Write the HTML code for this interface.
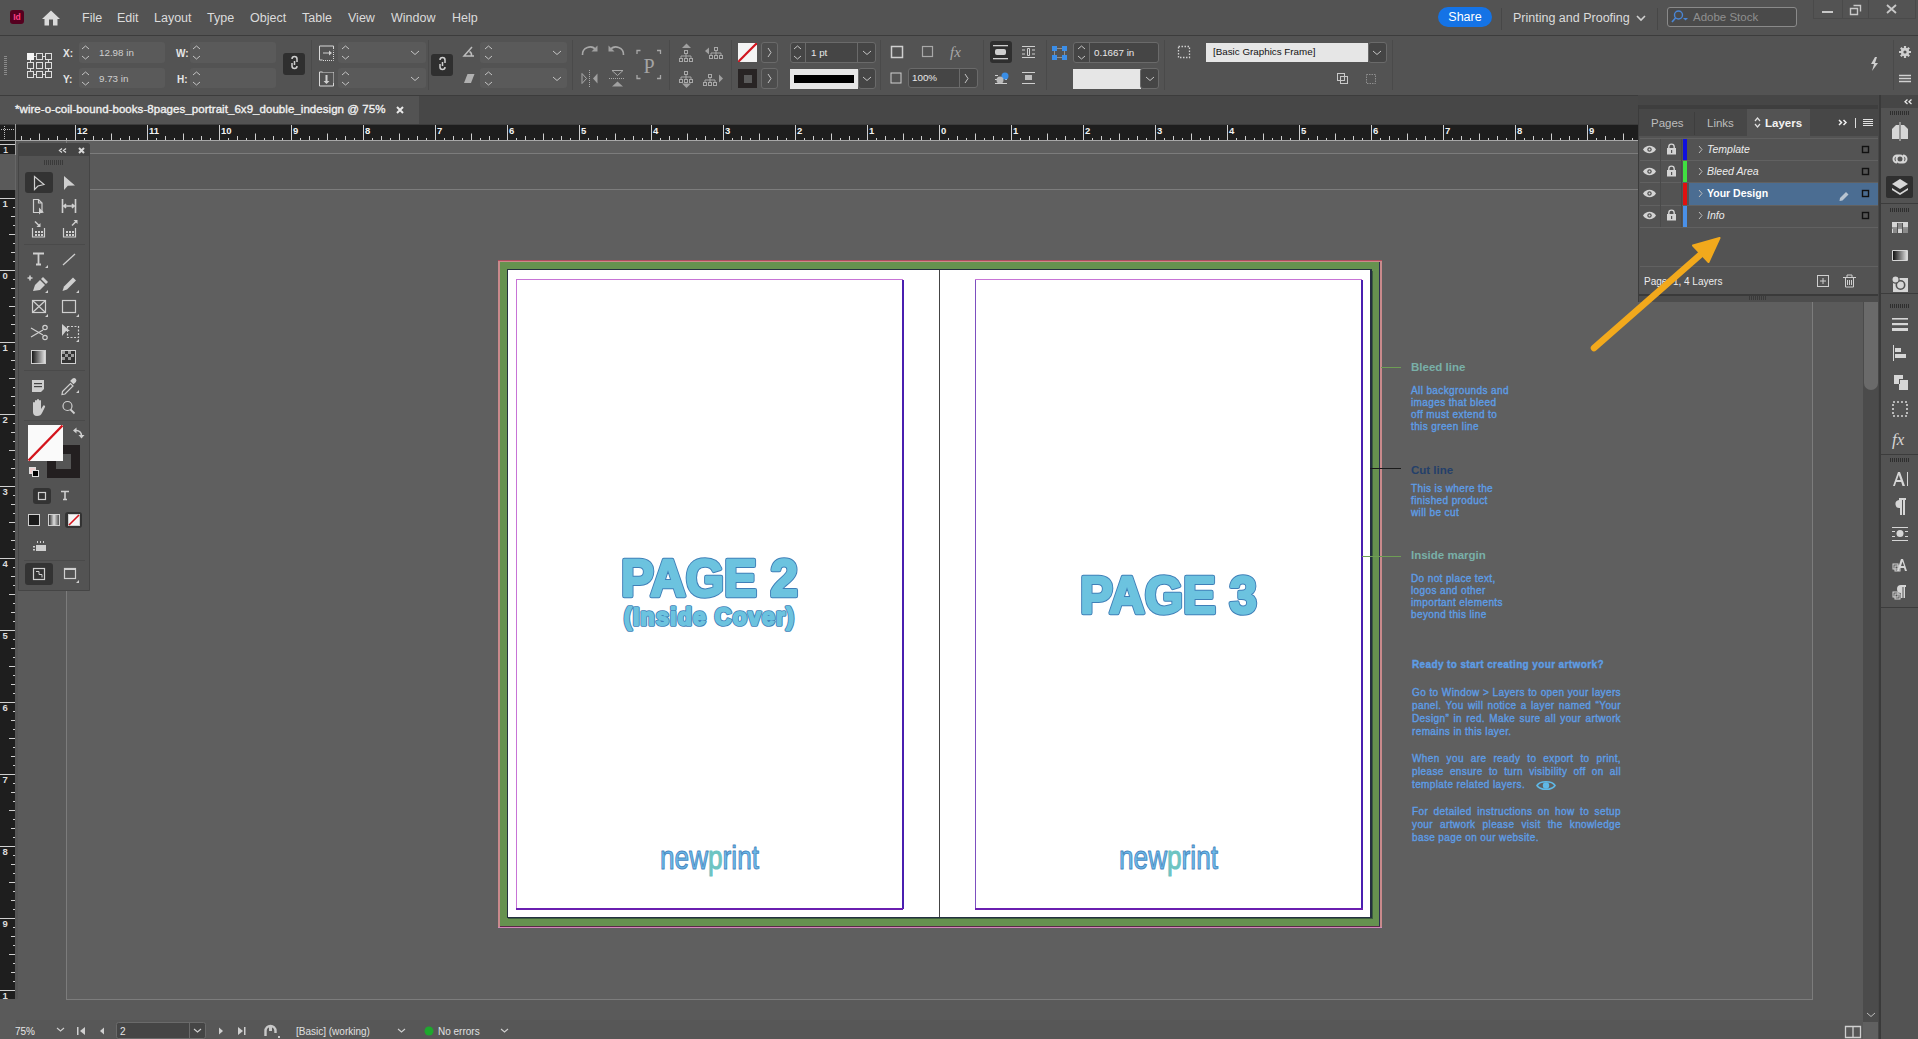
<!DOCTYPE html>
<html><head><meta charset="utf-8"><title>InDesign</title>
<style>
*{margin:0;padding:0;box-sizing:border-box}
html,body{width:1918px;height:1039px;overflow:hidden;background:#606060;font-family:"Liberation Sans",sans-serif;color:#d6d6d6}
.a{position:absolute}
.mb{left:0;top:0;width:1918px;height:36px;background:#535353;border-bottom:1px solid #3c3c3c}
.mi{position:absolute;top:11px;font-size:12.5px;color:#dcdcdc;white-space:nowrap}
.cb{left:0;top:36px;width:1918px;height:60px;background:#535353;border-bottom:1px solid #3c3c3c}
.tb{left:0;top:96px;width:1638px;height:28px;background:#474747}
.fld{position:absolute;background:#5a5a5a;border-radius:3px}
.lbl{position:absolute;font-size:10px;color:#e6e6e6;font-weight:bold;white-space:nowrap}
.val{position:absolute;font-size:9.8px;color:#cfcfcf;white-space:nowrap}
.sep{position:absolute;width:1px;background:#4a4a4a}
.btn{position:absolute;border:1px solid #6a6a6a;border-radius:3px;background:#4d4d4d}
.inf{position:absolute;font-size:10px;letter-spacing:0.38px;line-height:12px;color:#5d9de6;white-space:nowrap;-webkit-text-stroke:0.35px #5d9de6}
.ih{position:absolute;font-size:11.5px;letter-spacing:0px;font-weight:bold;color:#7aa8b0;white-space:nowrap}
.jl{display:block;text-align:justify;text-align-last:justify;white-space:normal}
.ll{display:block;text-align:left}

</style></head><body>
<div class="a mb">
 <div class="a" style="left:10px;top:10px;width:14px;height:14px;background:#55001f;border-radius:3px;color:#ff3f86;font-size:8.5px;font-weight:bold;text-align:center;line-height:14px">Id</div>
 <svg class="a" style="left:42px;top:9.5px" width="18" height="16" viewBox="0 0 18 16"><path d="M9 0.5L18 9H15.5V15.5H11V9.5H7V15.5H2.5V9H0Z" fill="#dadada"/></svg>
 <span class="mi" style="left:82px">File</span>
 <span class="mi" style="left:117px">Edit</span>
 <span class="mi" style="left:154px">Layout</span>
 <span class="mi" style="left:207px">Type</span>
 <span class="mi" style="left:250px">Object</span>
 <span class="mi" style="left:302px">Table</span>
 <span class="mi" style="left:348px">View</span>
 <span class="mi" style="left:391px">Window</span>
 <span class="mi" style="left:452px">Help</span>
 <div class="a" style="left:1438px;top:7px;width:54px;height:20px;background:#1473e6;border-radius:10px;color:#fff;font-size:12.5px;text-align:center;line-height:20px">Share</div>
 <div class="a" style="left:1501px;top:8px;width:1px;height:22px;background:#474747"></div>
 <span class="mi" style="left:1513px">Printing and Proofing</span>
 <svg class="a" style="left:1636px;top:15px" width="10" height="7"><path d="M1 1 L5 5 L9 1" stroke="#d0d0d0" stroke-width="1.6" fill="none"/></svg>
 <div class="a" style="left:1657px;top:8px;width:1px;height:22px;background:#474747"></div>
 <div class="a" style="left:1667px;top:7px;width:130px;height:20px;border:1px solid #8a8a8a;border-radius:3px;background:#4a4a4a"></div>
 <span class="mi" style="left:1693px;top:11px;color:#8f8f8f;font-size:11.5px">Adobe Stock</span>
 <svg class="a" style="left:1670px;top:9px" width="22" height="16"><circle cx="8.5" cy="6" r="4" fill="none" stroke="#4a86d6" stroke-width="1.4"/><path d="M5.5 9l-3.5 4" stroke="#4a86d6" stroke-width="1.6"/><path d="M13 9h5l-2.5 2.5z" fill="#4a86d6"/></svg>
</div>
<div class="a cb"></div>
<div class="a" style="left:0;top:0">
<svg class="a" style="left:0;top:0" width="1918" height="96" viewBox="0 0 1918 96">
 <g fill="#8a8a8a"><rect x="4" y="56" width="3" height="1"/><rect x="4" y="58" width="3" height="1"/><rect x="4" y="60" width="3" height="1"/><rect x="4" y="62" width="3" height="1"/><rect x="4" y="64" width="3" height="1"/><rect x="4" y="66" width="3" height="1"/><rect x="4" y="68" width="3" height="1"/><rect x="4" y="70" width="3" height="1"/><rect x="4" y="72" width="3" height="1"/><rect x="4" y="74" width="3" height="1"/></g>
 <g fill="none" stroke="#dedede" stroke-width="1">
  <rect x="36.5" y="53.5" width="6" height="6"/><rect x="45.5" y="53.5" width="6" height="6"/>
  <rect x="27.5" y="62.5" width="6" height="6"/><rect x="36.5" y="62.5" width="6" height="6"/><rect x="45.5" y="62.5" width="6" height="6"/>
  <rect x="27.5" y="71.5" width="6" height="6"/><rect x="36.5" y="71.5" width="6" height="6"/><rect x="45.5" y="71.5" width="6" height="6"/>
  <path d="M33.5 56.5h3M42.5 56.5h3M30.5 59.5v3M48.5 59.5v3M30.5 68.5v3M48.5 68.5v3M33.5 74.5h3M42.5 74.5h3"/>
 </g>
 <rect x="27" y="53" width="7" height="7" fill="#f4f4f4"/>
</svg>
<span class="lbl" style="left:63px;top:48px">X:</span>
<span class="lbl" style="left:63px;top:74px">Y:</span>
<div class="fld" style="left:79px;top:42px;width:86px;height:21px"></div>
<div class="fld" style="left:79px;top:68px;width:86px;height:20px"></div>
<span class="val" style="left:99px;top:47px">12.98 in</span>
<span class="val" style="left:99px;top:73px">9.73 in</span>
<span class="lbl" style="left:176px;top:48px">W:</span>
<span class="lbl" style="left:177px;top:74px">H:</span>
<div class="fld" style="left:190px;top:42px;width:86px;height:21px"></div>
<div class="fld" style="left:190px;top:68px;width:86px;height:20px"></div>
<div class="a" style="left:283px;top:53px;width:22px;height:22px;background:#2f2f2f;border-radius:3px"></div>
<div class="a" style="left:431px;top:54px;width:22px;height:22px;background:#2f2f2f;border-radius:3px"></div>
<div class="sep" style="left:311px;top:40px;height:50px"></div>
<div class="fld" style="left:338px;top:42px;width:88px;height:21px"></div>
<div class="fld" style="left:338px;top:68px;width:88px;height:20px"></div>
<div class="sep" style="left:428px;top:40px;height:50px"></div>
<div class="fld" style="left:480px;top:42px;width:87px;height:21px"></div>
<div class="fld" style="left:480px;top:68px;width:87px;height:20px"></div>
<div class="sep" style="left:572px;top:40px;height:50px"></div>
<div class="sep" style="left:669px;top:40px;height:50px"></div>
<div class="sep" style="left:731px;top:40px;height:50px"></div>
<div class="a" style="left:738px;top:43px;width:19px;height:19px;background:#f4f4f4;overflow:hidden"><svg width="19" height="19" style="display:block"><path d="M-1 20 L20 -1" stroke="#d0141e" stroke-width="2.2"/></svg></div>
<div class="a" style="left:738px;top:69px;width:19px;height:19px;background:#282424"><div class="a" style="left:6px;top:6px;width:8px;height:8px;background:#5a5a5a"></div></div>
<div class="btn" style="left:761px;top:42px;width:17px;height:21px"></div>
<div class="btn" style="left:761px;top:68px;width:17px;height:21px"></div>
<div class="btn" style="left:790px;top:42px;width:86px;height:21px;background:#454545"></div>
<div class="a" style="left:805px;top:43px;width:1px;height:19px;background:#6a6a6a"></div>
<div class="a" style="left:857px;top:43px;width:1px;height:19px;background:#6a6a6a"></div>
<span class="val" style="left:811px;top:47px;color:#e8e8e8">1 pt</span>
<div class="a" style="left:790px;top:69px;width:68px;height:20px;background:#e6e6e6"><div class="a" style="left:4px;top:6px;width:60px;height:8px;background:#000"></div></div>
<div class="btn" style="left:858px;top:68px;width:18px;height:21px;background:#454545"></div>
<div class="sep" style="left:880px;top:40px;height:50px"></div>
<div class="btn" style="left:908px;top:68px;width:70px;height:20px;background:#454545"></div>
<div class="a" style="left:959px;top:69px;width:1px;height:18px;background:#6a6a6a"></div>
<span class="val" style="left:912px;top:72px;color:#e8e8e8">100%</span>
<div class="sep" style="left:983px;top:40px;height:50px"></div>
<div class="a" style="left:990px;top:41px;width:22px;height:22px;background:#2f2f2f;border-radius:3px"></div>
<div class="sep" style="left:1046px;top:40px;height:50px"></div>
<div class="btn" style="left:1073px;top:42px;width:86px;height:21px;background:#454545"></div>
<div class="a" style="left:1089px;top:43px;width:1px;height:19px;background:#6a6a6a"></div>
<span class="val" style="left:1094px;top:47px;color:#e8e8e8">0.1667 in</span>
<div class="a" style="left:1073px;top:69px;width:68px;height:20px;background:#e6e6e6"></div>
<div class="btn" style="left:1140px;top:68px;width:19px;height:21px;background:#454545"></div>
<div class="sep" style="left:1164px;top:40px;height:50px"></div>
<div class="a" style="left:1206px;top:43px;width:162px;height:19px;background:#e6e6e6"></div>
<span class="val" style="left:1213px;top:46px;color:#111">[Basic Graphics Frame]</span>
<div class="btn" style="left:1368px;top:42px;width:19px;height:21px;background:#454545"></div>
<div class="sep" style="left:1392px;top:40px;height:50px"></div>
<div class="sep" style="left:1893px;top:40px;height:50px"></div>
</div>
<svg class="a" style="left:0;top:36px" width="1918" height="60" viewBox="0 36 1918 60">
 <g fill="none" stroke="#c4c4c4" stroke-width="1">
  <!-- spinners -->
  <path d="M82 49l3.5-3 3.5 3M82 56l3.5 3 3.5-3M82 75l3.5-3 3.5 3M82 82l3.5 3 3.5-3"/>
  <path d="M193 49l3.5-3 3.5 3M193 56l3.5 3 3.5-3M193 75l3.5-3 3.5 3M193 82l3.5 3 3.5-3"/>
  <path d="M342 49l3.5-3 3.5 3M342 56l3.5 3 3.5-3M342 75l3.5-3 3.5 3M342 82l3.5 3 3.5-3"/>
  <path d="M485 49l3.5-3 3.5 3M485 56l3.5 3 3.5-3M485 75l3.5-3 3.5 3M485 82l3.5 3 3.5-3"/>
  <path d="M794 49l3.5-3 3.5 3M794 56l3.5 3 3.5-3"/>
  <path d="M1078 49l3.5-3 3.5 3M1078 56l3.5 3 3.5-3"/>
  <!-- dropdown chevrons -->
  <path d="M411 51l4 3.5 4-3.5M411 77l4 3.5 4-3.5M553 51l4 3.5 4-3.5M553 77l4 3.5 4-3.5"/>
  <path d="M863 51l4 3.5 4-3.5M863 77l4 3.5 4-3.5M1146 77l4 3.5 4-3.5M1373 51l4 3.5 4-3.5"/>
  <path d="M768 48l3 4.5-3 4.5M768 74l3 4.5-3 4.5M965 74l3 4.5-3 4.5"/>
  <!-- scale icons -->
  <path d="M319.5 46v14h3M319.5 46h14M333.5 46v3" stroke="#d8d8d8"/>
  <path d="M319.5 72v14h14v-3M319.5 72h3" stroke="#d8d8d8"/>
  <path d="M323 60.5h10.5v-10M333.5 72.5v10.5M322.5 72.5h11" stroke="#d8d8d8" stroke-dasharray="1 1"/>
  <!-- chain links -->
  <path d="M292 59a2.5 2.5 0 0 1 5 0v3M297 66a2.5 2.5 0 0 1-5 0v-3M294.5 61v4" stroke="#cfcfcf" stroke-width="1.5"/>
  <path d="M440 60a2.5 2.5 0 0 1 5 0v3M445 67a2.5 2.5 0 0 1-5 0v-3M442.5 62v4" stroke="#cfcfcf" stroke-width="1.5"/>
  <!-- angle -->
  <path d="M472 47l-8 9h10M469.5 51.5a4 4 0 0 1 2 4" stroke="#bdbdbd" stroke-width="1.5"/>
  <!-- rotate -->
  <!-- P bracket -->
  <!-- fx etc -->
  <rect x="891.5" y="46.5" width="11" height="11" stroke="#cfcfcf" stroke-width="1.5"/>
  <rect x="922.5" y="46.5" width="10" height="10" stroke="#a8a8a8" stroke-width="1.2"/>
  <rect x="891" y="73" width="10" height="10" stroke="#cfcfcf" stroke-width="1"/>
  <!-- object style icon -->
  <rect x="1178.5" y="46.5" width="11" height="11" stroke="#cfcfcf" stroke-dasharray="1.5 1.5" stroke-width="1.3"/>
  <!-- row2 small icons -->
  <rect x="1337.5" y="73.5" width="7" height="7" stroke="#c8c8c8"/><rect x="1340.5" y="76.5" width="7" height="7" stroke="#c8c8c8"/>
  <rect x="1366.5" y="74.5" width="9" height="9" stroke="#8f8f8f" stroke-dasharray="1.5 1"/>
  <!-- text wrap -->
  <path d="M1022 46.5h13M1022 57.5h13M1022 50h3M1032 50h3M1022 54h3M1032 54h3M1027.5 48.5h2v7h-2z" stroke="#cfcfcf"/>
  <path d="M995 79.5h4M1005 79.5h2M995 83.5h12M995 75.5h3" stroke="#cfcfcf"/>
  <path d="M1022 72.5h13M1022 83.5h13" stroke="#cfcfcf"/>
  <!-- gear/hamburger -->
  <path d="M1899 75.5h12M1899 78.5h12M1899 81.5h12" stroke="#d0d0d0" stroke-width="1.3"/>
  <!-- search -->
  <circle cx="1679" cy="14" r="3.3" stroke="#4b88d8" stroke-width="1.3"/>
 </g>
 <g fill="#cfcfcf">
  <path d="M323 52.5h6v-2l3 2.5-3 2.5v-2h-6z" />
  <path d="M325.5 75h2v6h2l-3 3-3-3h2z"/>
  <path d="M464 83l3.5-9h7l-3.5 9z" fill="#b0b0b0"/>
  <!-- select container icons -->
  <!-- container selection text wrap active -->
  <rect x="993" y="45" width="15" height="1.3"/><rect x="993" y="58" width="15" height="1.3"/><rect x="995" y="49" width="11" height="6" rx="2"/>
  <!-- blue corner icon -->
  <rect x="1052" y="46" width="5" height="5" fill="#3b8ee8"/><rect x="1062" y="46" width="5" height="5" fill="#3b8ee8"/><rect x="1052" y="55" width="5" height="5" fill="#3b8ee8"/><rect x="1062" y="55" width="5" height="5" fill="#3b8ee8"/>
  <rect x="1057" y="48" width="5" height="1" fill="#8f8f8f"/><rect x="1057" y="57" width="5" height="1" fill="#8f8f8f"/><rect x="1054" y="51" width="1" height="4" fill="#8f8f8f"/><rect x="1064" y="51" width="1" height="4" fill="#8f8f8f"/>
  <circle cx="1005" cy="76" r="3.5" fill="#3a8ee6"/><circle cx="1000" cy="80" r="3.5" fill="#bbb"/>
  <rect x="1025" y="75" width="7" height="5" fill="#bdbdbd"/>
  <!-- lightning -->
  <path d="M1875 57l-4 7h3l-2 7 6-8h-3l2-6z" fill="#cfcfcf"/>
  <circle cx="1905" cy="52" r="4.2" fill="#cfcfcf"/>
  <path d="M1905 46v12M1899 52h12M1900.8 47.8l8.4 8.4M1909.2 47.8l-8.4 8.4" stroke="#cfcfcf" stroke-width="2.2"/>
  <circle cx="1905" cy="52" r="1.6" fill="#535353"/>
  <path d="M1684 17l2 2" stroke="#4b88d8" stroke-width="1.5"/>
  <path d="M1685 20h4l-2 2z" fill="#4b88d8"/>
 </g>
 <g fill="none" stroke="#a8a8a8" stroke-width="1">
  <path d="M582.5 55a7.5 7.5 0 0 1 13.5-5" stroke-width="1.6"/><path d="M623.5 55a7.5 7.5 0 0 0-13.5-5" stroke-width="1.6"/>
  <path d="M589.5 70v17M575 0" stroke-dasharray="1 1"/><path d="M609 78.5h16" stroke-dasharray="1 1"/>
  <path d="M582 73.5v10l4.5-5z"/><path d="M612 70.5h11l-5.5 5z"/>
  <path d="M637 54v-3.5h3.5M657 50.5h3.5v3.5M637 75v3.5h3.5M657 78.5h3.5v-3.5" stroke-width="1.3"/>
  <rect x="684.5" y="50.5" width="3" height="3"/><path d="M686 53.5v2.5M681 58v-2h10v2M686 56v2"/><rect x="679.5" y="58.5" width="3" height="3"/><rect x="684.5" y="58.5" width="3" height="3"/><rect x="689.5" y="58.5" width="3" height="3"/><rect x="714.5" y="47.5" width="3" height="3"/><path d="M716 50.5v2.5M711 55v-2h10v2M716 53v2"/><rect x="709.5" y="55.5" width="3" height="3"/><rect x="714.5" y="55.5" width="3" height="3"/><rect x="719.5" y="55.5" width="3" height="3"/><rect x="684.5" y="71.5" width="3" height="3"/><path d="M686 74.5v2.5M681 79v-2h10v2M686 77v2"/><rect x="679.5" y="79.5" width="3" height="3"/><rect x="684.5" y="79.5" width="3" height="3"/><rect x="689.5" y="79.5" width="3" height="3"/><rect x="708.5" y="74.5" width="3" height="3"/><path d="M710 77.5v2.5M705 82v-2h10v2M710 80v2"/><rect x="703.5" y="82.5" width="3" height="3"/><rect x="708.5" y="82.5" width="3" height="3"/><rect x="713.5" y="82.5" width="3" height="3"/>
 </g>
 <g fill="#a0a0a0"><path d="M597.5 45.5v6h-6z"/><path d="M608.5 45.5v6h6z"/><path d="M597.5 73.5v10l-4.5-5z"/><path d="M612 86.5h11l-5.5-5z"/>
  <path d="M682 48l4.5-4.5 4.5 4.5z"/><path d="M709 47.5v7l-4-3.5z"/><path d="M682 83.5l4.5 4.5 4.5-4.5z"/><path d="M719 74.5v8l4-4z"/></g>
 <text x="643.5" y="72.5" font-family="Liberation Serif, serif" font-size="20" fill="#a4a4a4">P</text>
 <text x="950" y="57" font-family="Liberation Serif, serif" font-style="italic" font-size="15" fill="#a8a8a8">fx</text>
</svg>
<div class="a" style="left:1813px;top:0;width:103px;height:19px;border:1px solid #4a4a4a;border-top:0"></div>
<div class="a" style="left:1842px;top:0;width:1px;height:18px;background:#4a4a4a"></div>
<div class="a" style="left:1868px;top:0;width:1px;height:18px;background:#4a4a4a"></div>
<svg class="a" style="left:1813px;top:0" width="105" height="20">
 <rect x="9" y="11" width="11" height="2" fill="#c8c8c8"/>
 <path d="M37.5 8.5h7v6h-7zM40.5 5.5h7v6" fill="none" stroke="#c8c8c8" stroke-width="1.4"/>
 <path d="M74 5l9 8M83 5l-9 8" stroke="#c8c8c8" stroke-width="1.8"/>
</svg>
<div class="a" style="left:0;top:141px;width:1863px;height:880px;background:#5a5a5a"></div>
<div class="a" style="left:66px;top:141px;width:1747px;height:13px;background:#5f5f5f;border:1px solid #7c7c7c;border-top:0"></div>
<div class="a" style="left:66px;top:189px;width:1747px;height:811px;background:#5f5f5f;border:1px solid #7c7c7c"></div>
<svg class="a" style="left:490px;top:252px" width="900" height="685" viewBox="490 252 900 685">
 <rect x="498" y="260" width="884" height="668" fill="#c98a8c"/>
 <rect x="498" y="260" width="884" height="1" fill="#b04c5c"/>
 <rect x="500" y="262" width="879" height="664" fill="#66924f"/>
 <rect x="1379" y="262" width="1" height="665" fill="#2c3050"/>
 <rect x="500" y="926" width="880" height="1" fill="#5c2848"/>
 <rect x="498" y="927" width="884" height="1" fill="#d088b8"/>
 <rect x="507" y="269" width="865" height="649" fill="#24303f"/>
 <rect x="508" y="270" width="862" height="647" fill="#ffffff"/>
 <rect x="508" y="918" width="865" height="1" fill="#3d5e3f"/>
 <rect x="1372" y="271" width="1" height="648" fill="#3d5e3f"/>
 <rect x="939" y="270" width="1" height="647" fill="#444"/>
 <rect x="516.5" y="279.5" width="386" height="629" fill="none" stroke="#c774d6" stroke-width="1"/>
 <rect x="902" y="280" width="2" height="629" fill="#4a1fb0"/>
 <rect x="975.5" y="279.5" width="386" height="629" fill="none" stroke="#c774d6" stroke-width="1"/>
 <rect x="975" y="280" width="1" height="629" fill="#7d4fc0"/>
 <rect x="1361" y="280" width="2" height="629" fill="#4a1fb0"/>
 <rect x="516" y="908" width="387" height="2" fill="#6a1fb0"/>
 <rect x="975" y="908" width="388" height="2" fill="#6a1fb0"/>
</svg>
<div class="a" style="left:0;top:96px;width:1638px;height:28px;background:#474747"></div>
<div class="a" style="left:0;top:96px;width:419px;height:28px;background:#535353"></div>
<span class="a" style="left:15px;top:103px;font-size:11.5px;color:#f0f0f0;white-space:nowrap;-webkit-text-stroke:0.35px #f0f0f0;letter-spacing:0.05px">*wire-o-coil-bound-books-8pages_portrait_6x9_double_indesign @ 75%</span>
<svg class="a" style="left:396px;top:106px" width="8" height="8"><path d="M1 1L7 7M7 1L1 7" stroke="#e8e8e8" stroke-width="2"/></svg>
<svg class="a" style="left:0;top:124px" width="1638" height="17" viewBox="0 124 1638 17">
<rect x="0" y="124" width="1638" height="1" fill="#3c3c3c"/>
<rect x="0" y="125" width="1638" height="15" fill="#1e1e1e"/>
<rect x="0" y="140" width="1638" height="1" fill="#a8a8a8"/>
<rect x="15" y="124" width="1" height="16" fill="#9d9d9d"/>
<path d="M21.5 136v4M30.5 138v2M39.5 133.5v6.5M48.5 138v2M57.5 136v4M66.5 138v2M75.5 125v15M84.5 138v2M93.5 136v4M102.5 138v2M111.5 133.5v6.5M120.5 138v2M129.5 136v4M138.5 138v2M147.5 125v15M156.5 138v2M165.5 136v4M174.5 138v2M183.5 133.5v6.5M192.5 138v2M201.5 136v4M210.5 138v2M219.5 125v15M228.5 138v2M237.5 136v4M246.5 138v2M255.5 133.5v6.5M264.5 138v2M273.5 136v4M282.5 138v2M291.5 125v15M300.5 138v2M309.5 136v4M318.5 138v2M327.5 133.5v6.5M336.5 138v2M345.5 136v4M354.5 138v2M363.5 125v15M372.5 138v2M381.5 136v4M390.5 138v2M399.5 133.5v6.5M408.5 138v2M417.5 136v4M426.5 138v2M435.5 125v15M444.5 138v2M453.5 136v4M462.5 138v2M471.5 133.5v6.5M480.5 138v2M489.5 136v4M498.5 138v2M507.5 125v15M516.5 138v2M525.5 136v4M534.5 138v2M543.5 133.5v6.5M552.5 138v2M561.5 136v4M570.5 138v2M579.5 125v15M588.5 138v2M597.5 136v4M606.5 138v2M615.5 133.5v6.5M624.5 138v2M633.5 136v4M642.5 138v2M651.5 125v15M660.5 138v2M669.5 136v4M678.5 138v2M687.5 133.5v6.5M696.5 138v2M705.5 136v4M714.5 138v2M723.5 125v15M732.5 138v2M741.5 136v4M750.5 138v2M759.5 133.5v6.5M768.5 138v2M777.5 136v4M786.5 138v2M795.5 125v15M804.5 138v2M813.5 136v4M822.5 138v2M831.5 133.5v6.5M840.5 138v2M849.5 136v4M858.5 138v2M867.5 125v15M876.5 138v2M885.5 136v4M894.5 138v2M903.5 133.5v6.5M912.5 138v2M921.5 136v4M930.5 138v2M939.5 125v15M948.5 138v2M957.5 136v4M966.5 138v2M975.5 133.5v6.5M984.5 138v2M993.5 136v4M1002.5 138v2M1011.5 125v15M1020.5 138v2M1029.5 136v4M1038.5 138v2M1047.5 133.5v6.5M1056.5 138v2M1065.5 136v4M1074.5 138v2M1083.5 125v15M1092.5 138v2M1101.5 136v4M1110.5 138v2M1119.5 133.5v6.5M1128.5 138v2M1137.5 136v4M1146.5 138v2M1155.5 125v15M1164.5 138v2M1173.5 136v4M1182.5 138v2M1191.5 133.5v6.5M1200.5 138v2M1209.5 136v4M1218.5 138v2M1227.5 125v15M1236.5 138v2M1245.5 136v4M1254.5 138v2M1263.5 133.5v6.5M1272.5 138v2M1281.5 136v4M1290.5 138v2M1299.5 125v15M1308.5 138v2M1317.5 136v4M1326.5 138v2M1335.5 133.5v6.5M1344.5 138v2M1353.5 136v4M1362.5 138v2M1371.5 125v15M1380.5 138v2M1389.5 136v4M1398.5 138v2M1407.5 133.5v6.5M1416.5 138v2M1425.5 136v4M1434.5 138v2M1443.5 125v15M1452.5 138v2M1461.5 136v4M1470.5 138v2M1479.5 133.5v6.5M1488.5 138v2M1497.5 136v4M1506.5 138v2M1515.5 125v15M1524.5 138v2M1533.5 136v4M1542.5 138v2M1551.5 133.5v6.5M1560.5 138v2M1569.5 136v4M1578.5 138v2M1587.5 125v15M1596.5 138v2M1605.5 136v4M1614.5 138v2M1623.5 133.5v6.5M1632.5 138v2" stroke="#cfcfcf" stroke-width="1"/>
<g font-family="Liberation Sans, sans-serif"><text x="77" y="134" font-size="9.5" font-weight="bold" fill="#f2f2f2">12</text><text x="149" y="134" font-size="9.5" font-weight="bold" fill="#f2f2f2">11</text><text x="221" y="134" font-size="9.5" font-weight="bold" fill="#f2f2f2">10</text><text x="293" y="134" font-size="9.5" font-weight="bold" fill="#f2f2f2">9</text><text x="365" y="134" font-size="9.5" font-weight="bold" fill="#f2f2f2">8</text><text x="437" y="134" font-size="9.5" font-weight="bold" fill="#f2f2f2">7</text><text x="509" y="134" font-size="9.5" font-weight="bold" fill="#f2f2f2">6</text><text x="581" y="134" font-size="9.5" font-weight="bold" fill="#f2f2f2">5</text><text x="653" y="134" font-size="9.5" font-weight="bold" fill="#f2f2f2">4</text><text x="725" y="134" font-size="9.5" font-weight="bold" fill="#f2f2f2">3</text><text x="797" y="134" font-size="9.5" font-weight="bold" fill="#f2f2f2">2</text><text x="869" y="134" font-size="9.5" font-weight="bold" fill="#f2f2f2">1</text><text x="941" y="134" font-size="9.5" font-weight="bold" fill="#f2f2f2">0</text><text x="1013" y="134" font-size="9.5" font-weight="bold" fill="#f2f2f2">1</text><text x="1085" y="134" font-size="9.5" font-weight="bold" fill="#f2f2f2">2</text><text x="1157" y="134" font-size="9.5" font-weight="bold" fill="#f2f2f2">3</text><text x="1229" y="134" font-size="9.5" font-weight="bold" fill="#f2f2f2">4</text><text x="1301" y="134" font-size="9.5" font-weight="bold" fill="#f2f2f2">5</text><text x="1373" y="134" font-size="9.5" font-weight="bold" fill="#f2f2f2">6</text><text x="1445" y="134" font-size="9.5" font-weight="bold" fill="#f2f2f2">7</text><text x="1517" y="134" font-size="9.5" font-weight="bold" fill="#f2f2f2">8</text><text x="1589" y="134" font-size="9.5" font-weight="bold" fill="#f2f2f2">9</text></g>
<g fill="#bdbdbd">
<rect x="1" y="129" width="1" height="1"/>
<rect x="4" y="126" width="1" height="1"/>
<rect x="3" y="129" width="1" height="1"/>
<rect x="4" y="128" width="1" height="1"/>
<rect x="5" y="129" width="1" height="1"/>
<rect x="4" y="130" width="1" height="1"/>
<rect x="7" y="129" width="1" height="1"/>
<rect x="4" y="132" width="1" height="1"/>
<rect x="9" y="129" width="1" height="1"/>
<rect x="4" y="134" width="1" height="1"/>
<rect x="11" y="129" width="1" height="1"/>
<rect x="4" y="136" width="1" height="1"/>
<rect x="13" y="129" width="1" height="1"/>
<rect x="4" y="138" width="1" height="1"/>
</g>
</svg>
<svg class="a" style="left:0;top:141px" width="18" height="859" viewBox="0 141 18 859">
<rect x="0" y="141" width="15" height="13" fill="#1e1e1e"/>
<rect x="0" y="190" width="15" height="809" fill="#1e1e1e"/>
<rect x="15" y="141" width="3" height="858" fill="#555555"/>
<rect x="15" y="141" width="1" height="14" fill="#a0a0a0"/>
<rect x="15" y="155" width="1" height="35" fill="#666666"/>
<path d="M0 198.5h15M13 207.5h2M11 216.5h4M13 225.5h2M9 234.5h6M13 243.5h2M11 252.5h4M13 261.5h2M0 270.5h15M13 279.5h2M11 288.5h4M13 297.5h2M9 306.5h6M13 315.5h2M11 324.5h4M13 333.5h2M0 342.5h15M13 351.5h2M11 360.5h4M13 369.5h2M9 378.5h6M13 387.5h2M11 396.5h4M13 405.5h2M0 414.5h15M13 423.5h2M11 432.5h4M13 441.5h2M9 450.5h6M13 459.5h2M11 468.5h4M13 477.5h2M0 486.5h15M13 495.5h2M11 504.5h4M13 513.5h2M9 522.5h6M13 531.5h2M11 540.5h4M13 549.5h2M0 558.5h15M13 567.5h2M11 576.5h4M13 585.5h2M9 594.5h6M13 603.5h2M11 612.5h4M13 621.5h2M0 630.5h15M13 639.5h2M11 648.5h4M13 657.5h2M9 666.5h6M13 675.5h2M11 684.5h4M13 693.5h2M0 702.5h15M13 711.5h2M11 720.5h4M13 729.5h2M9 738.5h6M13 747.5h2M11 756.5h4M13 765.5h2M0 774.5h15M13 783.5h2M11 792.5h4M13 801.5h2M9 810.5h6M13 819.5h2M11 828.5h4M13 837.5h2M0 846.5h15M13 855.5h2M11 864.5h4M13 873.5h2M9 882.5h6M13 891.5h2M11 900.5h4M13 909.5h2M0 918.5h15M13 927.5h2M11 936.5h4M13 945.5h2M9 954.5h6M13 963.5h2M11 972.5h4M13 981.5h2M0 990.5h15M0 144.5h15" stroke="#cfcfcf" stroke-width="1"/>
<g font-family="Liberation Sans, sans-serif"><text x="2.5" y="207" font-size="9.5" font-weight="bold" fill="#dcdcdc">1</text><text x="2.5" y="279" font-size="9.5" font-weight="bold" fill="#dcdcdc">0</text><text x="2.5" y="351" font-size="9.5" font-weight="bold" fill="#dcdcdc">1</text><text x="2.5" y="423" font-size="9.5" font-weight="bold" fill="#dcdcdc">2</text><text x="2.5" y="495" font-size="9.5" font-weight="bold" fill="#dcdcdc">3</text><text x="2.5" y="567" font-size="9.5" font-weight="bold" fill="#dcdcdc">4</text><text x="2.5" y="639" font-size="9.5" font-weight="bold" fill="#dcdcdc">5</text><text x="2.5" y="711" font-size="9.5" font-weight="bold" fill="#dcdcdc">6</text><text x="2.5" y="783" font-size="9.5" font-weight="bold" fill="#dcdcdc">7</text><text x="2.5" y="855" font-size="9.5" font-weight="bold" fill="#dcdcdc">8</text><text x="2.5" y="927" font-size="9.5" font-weight="bold" fill="#dcdcdc">9</text><text x="2.5" y="999" font-size="9.5" font-weight="bold" fill="#dcdcdc">1</text><text x="3" y="153" font-size="9.5" fill="#f2f2f2">1</text></g>
</svg><svg class="a" style="left:500px;top:500px" width="900" height="400" viewBox="500 500 900 400">
 <g font-family="Liberation Sans, sans-serif" font-weight="bold" stroke-linejoin="round">
  <text x="621" y="596" font-size="52" textLength="177" lengthAdjust="spacingAndGlyphs" fill="#6cc3df" stroke="#3f7fb8" stroke-width="4.5">PAGE 2</text>
  <text x="621" y="596" font-size="52" textLength="177" lengthAdjust="spacingAndGlyphs" fill="#6cc3df" stroke="#6cc3df" stroke-width="2.5">PAGE 2</text>
  <text x="624" y="625" font-size="23" textLength="170" lengthAdjust="spacing" fill="#6cc3df" stroke="#3f7fb8" stroke-width="3.5">(Inside Cover)</text>
  <text x="624" y="625" font-size="23" textLength="170" lengthAdjust="spacing" fill="#6cc3df" stroke="#6cc3df" stroke-width="1.8">(Inside Cover)</text>
  <text x="1080" y="613" font-size="52" textLength="177" lengthAdjust="spacingAndGlyphs" fill="#6cc3df" stroke="#3f7fb8" stroke-width="4.5">PAGE 3</text>
  <text x="1080" y="613" font-size="52" textLength="177" lengthAdjust="spacingAndGlyphs" fill="#6cc3df" stroke="#6cc3df" stroke-width="2.5">PAGE 3</text>
 </g>
 <g font-family="Liberation Sans, sans-serif" font-size="33" stroke-linejoin="round" font-weight="normal">
  <text x="660" y="869" textLength="99" lengthAdjust="spacingAndGlyphs" fill="#6cbcec" stroke="#4a88c0" stroke-width="1.0">new<tspan fill="#6cc4c2" stroke="#6cc4c2">p</tspan>rint</text>
  <text x="1119" y="869" textLength="99" lengthAdjust="spacingAndGlyphs" fill="#6cbcec" stroke="#4a88c0" stroke-width="1.0">new<tspan fill="#6cc4c2" stroke="#6cc4c2">p</tspan>rint</text>
 </g>
</svg>
<div class="a" style="left:1381px;top:367px;width:20px;height:1px;background:#6e9d55"></div>
<span class="ih" style="left:1411px;top:361px;color:#79b0a8">Bleed line</span>
<div class="inf" style="left:1411px;top:385px">All backgrounds and<br>images that bleed<br>off must extend to<br>this green line</div>
<div class="a" style="left:1370px;top:468px;width:31px;height:1px;background:#1a1a1a"></div>
<span class="ih" style="left:1411px;top:464px;color:#24406a">Cut line</span>
<div class="inf" style="left:1411px;top:483px">This is where the<br>finished product<br>will be cut</div>
<div class="a" style="left:1362px;top:556px;width:39px;height:1px;background:#6e9d55"></div>
<span class="ih" style="left:1411px;top:549px;color:#79b0a8">Inside margin</span>
<div class="inf" style="left:1411px;top:573px">Do not place text,<br>logos and other<br>important elements<br>beyond this line</div>
<div class="inf" style="left:1412px;top:659px;font-weight:bold">Ready to start creating your artwork?</div>
<div class="inf" style="left:1412px;top:686px;width:209px;line-height:13px"><span class="jl">Go to Window &gt; Layers to open your layers</span><span class="jl">panel. You will notice a layer named “Your</span><span class="jl">Design” in red. Make sure all your artwork</span><span class="ll">remains in this layer.</span></div>
<div class="inf" style="left:1412px;top:752px;width:209px;line-height:13px"><span class="jl">When you are ready to export to print,</span><span class="jl">please ensure to turn visibility off on all</span><span class="ll">template related layers.</span></div>
<svg class="a" style="left:1536px;top:779px" width="20" height="13" viewBox="0 0 20 13"><path d="M1 6.5C4 1.5 16 1.5 19 6.5C16 11.5 4 11.5 1 6.5Z" fill="none" stroke="#5fb8e6" stroke-width="1.6"/><circle cx="10" cy="6.5" r="3.2" fill="#5fb8e6"/></svg>
<div class="inf" style="left:1412px;top:805px;width:209px;line-height:13px"><span class="jl">For detailed instructions on how to setup</span><span class="jl">your artwork please visit the knowledge</span><span class="ll">base page on our website.</span></div>
<div class="a" style="left:18px;top:143px;width:72px;height:448px;background:#535353;border:1px solid #454545;border-radius:3px 3px 0 0"></div>
<div class="a" style="left:18px;top:143px;width:72px;height:13px;background:#444;border-radius:3px 3px 0 0"></div>
<svg class="a" style="left:18px;top:143px" width="72" height="448" viewBox="18 143 72 448">
 <g fill="none" stroke="#d8d8d8" stroke-width="1.3">
  <path d="M62 148.5l-2.5 2 2.5 2M66 148.5l-2.5 2 2.5 2"/>
  <path d="M79 148l5 5M84 148l-5 5" stroke-width="2"/>
 </g>
 <g fill="#3a3a3a"><rect x="44" y="160" width="1" height="5"/><rect x="46" y="160" width="1" height="5"/><rect x="48" y="160" width="1" height="5"/><rect x="50" y="160" width="1" height="5"/><rect x="52" y="160" width="1" height="5"/><rect x="54" y="160" width="1" height="5"/><rect x="56" y="160" width="1" height="5"/><rect x="58" y="160" width="1" height="5"/><rect x="60" y="160" width="1" height="5"/><rect x="62" y="160" width="1" height="5"/></g>
 <rect x="25" y="172" width="28" height="21" rx="3" fill="#333"/>
 <rect x="24" y="244" width="61" height="1" fill="#4a4a4a"/>
 <rect x="24" y="370" width="61" height="1" fill="#4a4a4a"/>
 <rect x="24" y="420" width="61" height="1" fill="#4a4a4a"/>
 <rect x="24" y="560" width="61" height="1" fill="#4a4a4a"/>
 <g fill="none" stroke="#cfcfcf" stroke-width="1.2">
  <!-- selection -->
  <path d="M34.5 176.5v13l3.5-3.5 6-1.5z"/>
  <!-- page tool -->
  <path d="M33.5 199.5h5l3.5 3.5v9.5h-8.5z M38.5 199.5v3.5h3.5"/>
  <!-- gap tool -->
  <path d="M62.5 199v14M75.5 199v14M64 206h10M66 204l-2 2 2 2M72 204l2 2-2 2" stroke-width="1.6"/>
  <!-- content collector -->
  <path d="M32.5 228v9h12v-9"/>
  <path d="M63.5 228v9h12v-9"/>
  <!-- type T -->
  <path d="M33 253.5h11M38.5 253.5v11M36 264.5h5" stroke-width="1.8"/>
  <!-- line -->
  <path d="M63 265l12-11" stroke-width="1.3"/>
  <!-- frame X -->
  <rect x="32.5" y="300.5" width="13" height="12"/><path d="M32.5 300.5l13 12M45.5 300.5l-13 12"/>
  <rect x="62.5" y="300.5" width="13" height="12"/>
  <!-- scissors -->
  <circle cx="45" cy="327.5" r="2.2"/><circle cx="45" cy="337.5" r="2.2"/><path d="M31 328l12 7M31 337l12-7"/>
  <!-- free transform -->
  <rect x="67.5" y="326.5" width="11" height="11" stroke-dasharray="2 1.5"/>
  <!-- zoom -->
  <circle cx="67.5" cy="406" r="4.5"/><path d="M70.5 409.5l4 4" stroke-width="1.8"/>
  <!-- eyedropper -->
  <path d="M62.5 391.5l8-8 2.5 2.5-8 8-3 .5z"/><path d="M71 381l2-2a1.8 1.8 0 0 1 2.5 2.5l-2 2z" fill="#cfcfcf"/>
 </g>
 <g fill="#cfcfcf">
  <path d="M64 176v14l3.8-4.2 7.2-.3z"/>
  <path d="M39 207.5v7l1.8-1.8 3.2-.2z"/>
  <path d="M35 221.5l4 4" stroke="#cfcfcf" stroke-width="1.5" fill="none"/><path d="M40.5 227v-4l-4 4z"/><path d="M72 225.5l4-4" stroke="#cfcfcf" stroke-width="1.5" fill="none"/><path d="M77.5 220v4l-4-4z"/>
  <rect x="35" y="231" width="2" height="2"/><rect x="38" y="231" width="2" height="2"/><rect x="41" y="231" width="2" height="2"/><rect x="35" y="234" width="2" height="2"/><rect x="38" y="234" width="2" height="2"/><rect x="41" y="234" width="2" height="2"/>
  <rect x="66" y="231" width="2" height="2"/><rect x="69" y="231" width="2" height="2"/><rect x="72" y="231" width="2" height="2"/><rect x="66" y="234" width="2" height="2"/><rect x="69" y="234" width="2" height="2"/><rect x="72" y="234" width="2" height="2"/>
  <!-- pen -->
  <path d="M33 291l2-6 5-5 5 5-5 5z"/><path d="M41 279l2-2 5 5-2 2z"/><path d="M27.5 277.2h5v1.6h-5zM29.2 275.5h1.6v5h-1.6z"/>
  <!-- pencil -->
  <path d="M62.5 291l1.5-4.5 9-9 3 3-9 9z"/>
  <!-- free transform arrow -->
  <path d="M62 324v12l4-5 4 0z"/>
  <!-- gradient swatch -->
  <!-- note -->
  <path d="M32 380h12v9l-3 3h-9z"/>
  <!-- hand -->
  <path d="M33 409v-6a1 1 0 0 1 2 0v4v-6a1 1 0 0 1 2 0v6v-7a1 1 0 0 1 2 0v7v-6a1 1 0 0 1 2 0v8l2-3a1 1 0 0 1 2 1l-3 6c-1 2-2 3-5 3s-4-2-4-4z"/>
  <!-- corner triangles -->
  <path d="M48 268h-3l3-3zM48 293h-3l3-3zM79 293h-3l3-3zM48 317h-3l3-3zM79 317h-3l3-3zM79 342h-3l3-3zM79 393h-3l3-3z"/>
 </g>
 <defs><linearGradient id="tg" x1="0" x2="1"><stop offset="0" stop-color="#111"/><stop offset="1" stop-color="#e8e8e8"/></linearGradient>
 <linearGradient id="tg2" x1="0" x2="1"><stop offset="0" stop-color="#222"/><stop offset="0.5" stop-color="#ddd"/><stop offset="1" stop-color="#444"/></linearGradient></defs>
 <rect x="31.5" y="350.5" width="14" height="13" fill="url(#tg)" stroke="#cfcfcf"/>
 <rect x="61.5" y="350.5" width="14" height="13" fill="#333" stroke="#cfcfcf"/>
 <g fill="#9a9a9a"><rect x="62" y="351" width="3" height="3"/><rect x="68" y="351" width="3" height="3"/><rect x="65" y="354" width="3" height="3"/><rect x="71" y="354" width="3" height="3"/><rect x="62" y="357" width="3" height="3"/><rect x="68" y="357" width="3" height="3"/></g>
 <g fill="#444"><rect x="34" y="383" width="8" height="1.2"/><rect x="34" y="386" width="8" height="1.2"/></g>
 <!-- fill/stroke -->
 <rect x="47" y="445" width="33" height="33" fill="#231f20"/>
 <rect x="56" y="454" width="15" height="15" fill="#555"/>
 <rect x="28" y="425" width="35" height="36" fill="#fafafa"/>
 <path d="M28.5 460.5L62.5 425.5" stroke="#d4141c" stroke-width="2.4"/>
 <path d="M76 430.5a5 5 0 0 1 5.5 5" fill="none" stroke="#cfcfcf" stroke-width="1.6"/><path d="M73 430.5l3.5-3v6zM81.5 438.5l-3-3.5h6z" fill="#cfcfcf"/>
 <rect x="29.5" y="467.5" width="6" height="6" fill="#f0d0d0" stroke="#ddd"/><rect x="32.5" y="470.5" width="6" height="6" fill="#000" stroke="#ddd"/>
 <!-- container / text -->
 <rect x="33" y="488" width="18" height="16" rx="3" fill="#333"/>
 <rect x="38.5" y="492.5" width="7" height="7" fill="none" stroke="#cfcfcf" stroke-width="1.2"/>
 <path d="M61 491.5h8M65 491.5v8M63 499.5h4" stroke="#cfcfcf" stroke-width="1.6" fill="none"/>
 <!-- color/gradient/none -->
 <rect x="28.5" y="514.5" width="11" height="11" fill="#1a1a1a" stroke="#cfcfcf"/>
 <rect x="48.5" y="514.5" width="11" height="11" fill="url(#tg2)" stroke="#cfcfcf"/>
 <rect x="65" y="512" width="17" height="16" rx="3" fill="#333"/>
 <rect x="68.5" y="514.5" width="11" height="11" fill="#f4f4f4" stroke="#cfcfcf"/>
 <path d="M69 525l10-10" stroke="#d4141c" stroke-width="1.6"/>
 <!-- screen mode -->
 <g fill="#cfcfcf"><rect x="36" y="545" width="10" height="6"/><rect x="33" y="546" width="2" height="1.5"/><rect x="33" y="549" width="2" height="1.5"/><rect x="37" y="541" width="1" height="2"/><rect x="40" y="541" width="1" height="2"/><rect x="43" y="541" width="1" height="2"/></g>
 <!-- view -->
 <rect x="25" y="563" width="28" height="22" rx="3" fill="#333"/>
 <rect x="33.5" y="568.5" width="11" height="11" fill="none" stroke="#cfcfcf" stroke-width="1.2"/>
 <path d="M36 571.5h3v3h3v3" fill="none" stroke="#cfcfcf"/>
 <rect x="64.5" y="568.5" width="11" height="10" fill="none" stroke="#cfcfcf" stroke-width="1.2"/><rect x="64" y="568" width="12" height="2" fill="#cfcfcf"/>
 <path d="M79 583h-3l3-3z" fill="#cfcfcf"/>
</svg>
<!-- dock background -->
<div class="a" style="left:1638px;top:95px;width:242px;height:14px;background:#464646"></div>
<div class="a" style="left:1638px;top:105px;width:242px;height:4px;background:#3e3e3e"></div>
<div class="a" style="left:1638px;top:109px;width:242px;height:27px;background:#474747"></div>
<div class="a" style="left:1747px;top:109px;width:63px;height:27px;background:#535353"></div>
<div class="a" style="left:1694px;top:112px;width:1px;height:23px;background:#3e3e3e"></div>
<span class="a" style="left:1651px;top:117px;font-size:11.5px;color:#bdbdbd">Pages</span>
<span class="a" style="left:1707px;top:117px;font-size:11.5px;color:#bdbdbd">Links</span>
<svg class="a" style="left:1754px;top:117px" width="7" height="11"><path d="M1 4l2.5-3 2.5 3M1 7l2.5 3 2.5-3" fill="none" stroke="#e0e0e0" stroke-width="1.2"/></svg>
<span class="a" style="left:1765px;top:117px;font-size:11.5px;color:#f2f2f2;font-weight:bold">Layers</span>
<svg class="a" style="left:1836px;top:117px" width="40" height="12"><path d="M3 3l2.5 2.5-2.5 2.5M7.5 3l2.5 2.5-2.5 2.5" fill="none" stroke="#f0f0f0" stroke-width="1.5"/><rect x="19" y="1" width="1" height="10" fill="#ddd"/><path d="M27 2.5h10M27 4.5h10M27 6.5h10M27 8.5h10" stroke="#e0e0e0" stroke-width="1"/></svg>
<!-- panel body -->
<div class="a" style="left:1638px;top:136px;width:242px;height:158px;background:#535353"></div>
<div class="a" style="left:1689px;top:183px;width:189px;height:22px;background:#4b6d92"></div>
<svg class="a" style="left:1638px;top:136px" width="242" height="166" viewBox="1638 136 242 166">
 <g fill="#616161"><rect x="1640" y="138" width="238" height="1"/><rect x="1640" y="160" width="238" height="1"/><rect x="1640" y="182" width="238" height="1"/><rect x="1640" y="205" width="238" height="1"/><rect x="1640" y="227" width="238" height="1"/><rect x="1640" y="266" width="238" height="1"/></g>
 <g fill="#4a4a4a"><rect x="1660" y="139" width="1" height="88"/><rect x="1681" y="139" width="1" height="88"/></g>
 <rect x="1683" y="139" width="4" height="21" fill="#1010e0"/>
 <rect x="1683" y="161" width="4" height="21" fill="#40e040"/>
 <rect x="1683" y="183" width="4" height="22" fill="#e01010"/>
 <rect x="1683" y="206" width="4" height="21" fill="#4a90e8"/>
 <g fill="#d4d4d4">
  <path id="eye" d="M1643 149.5c3-5 10-5 13 0c-3 5-10 5-13 0z"/>
  <path d="M1643 171.5c3-5 10-5 13 0c-3 5-10 5-13 0z"/>
  <path d="M1643 193.5c3-5 10-5 13 0c-3 5-10 5-13 0z"/>
  <path d="M1643 215.5c3-5 10-5 13 0c-3 5-10 5-13 0z"/>
 </g>
 <g fill="#535353"><circle cx="1649.5" cy="149.5" r="2.2"/><circle cx="1649.5" cy="171.5" r="2.2"/><circle cx="1649.5" cy="193.5" r="2.2"/><circle cx="1649.5" cy="215.5" r="2.2"/></g>
 <g fill="#d4d4d4"><circle cx="1649.5" cy="149.5" r="1"/><circle cx="1649.5" cy="171.5" r="1"/><circle cx="1649.5" cy="193.5" r="1"/><circle cx="1649.5" cy="215.5" r="1"/></g>
 <g fill="#d4d4d4">
  <rect x="1667" y="148" width="9" height="6.5"/><rect x="1667" y="170" width="9" height="6.5"/><rect x="1667" y="214" width="9" height="6.5"/>
 </g>
 <g fill="none" stroke="#d4d4d4" stroke-width="1.4"><path d="M1668.8 148v-1.2a2.7 2.7 0 0 1 5.4 0v1.2M1668.8 170v-1.2a2.7 2.7 0 0 1 5.4 0v1.2M1668.8 214v-1.2a2.7 2.7 0 0 1 5.4 0v1.2"/></g>
 <g fill="#535353"><rect x="1671" y="150" width="1.2" height="3"/><rect x="1671" y="172" width="1.2" height="3"/><rect x="1671" y="216" width="1.2" height="3"/></g>
 <g fill="none" stroke="#bdbdbd" stroke-width="1"><path d="M1699 146l3 3.5-3 3.5M1699 168l3 3.5-3 3.5M1699 190l3 3.5-3 3.5M1699 212l3 3.5-3 3.5"/></g>
 <g fill="none" stroke="#111" stroke-width="1.4"><rect x="1862.5" y="146.5" width="6" height="6"/><rect x="1862.5" y="168.5" width="6" height="6"/><rect x="1862.5" y="190.5" width="6" height="6"/><rect x="1862.5" y="212.5" width="6" height="6"/></g>
 <path d="M1840 198l6-6 2.5 2.5-6 6-3 .5z" fill="#b8c4d0"/>
 <g font-family="Liberation Sans, sans-serif" font-size="10.5" fill="#ececec" font-style="italic">
  <text x="1707" y="153">Template</text>
  <text x="1707" y="175">Bleed Area</text>
  <text x="1707" y="219">Info</text>
 </g>
 <text x="1707" y="197" font-family="Liberation Sans, sans-serif" font-size="10.5" font-weight="bold" fill="#fff">Your Design</text>
 <text x="1644" y="285" font-family="Liberation Sans, sans-serif" font-size="10" fill="#ececec">Page: 1, 4 Layers</text>
 <g fill="none" stroke="#cfcfcf" stroke-width="1"><rect x="1817.5" y="275.5" width="11" height="11"/><path d="M1823 278v6M1820 281h6"/><path d="M1843 277.5h13M1845.5 278v9h8v-9M1847.5 280v5M1849.5 280v5M1851.5 280v5M1847 277v-2h5v2"/></g>
 <rect x="1638" y="294" width="242" height="2" fill="#3a3a3a"/>
 <rect x="1638" y="296" width="242" height="6" fill="#4d4d4d"/>
 <g fill="#3a3a3a"><rect x="1749" y="296" width="1" height="4"/><rect x="1751" y="296" width="1" height="4"/><rect x="1753" y="296" width="1" height="4"/><rect x="1755" y="296" width="1" height="4"/><rect x="1757" y="296" width="1" height="4"/><rect x="1759" y="296" width="1" height="4"/><rect x="1761" y="296" width="1" height="4"/><rect x="1763" y="296" width="1" height="4"/><rect x="1765" y="296" width="1" height="4"/></g>
</svg>
<div class="a" style="left:1638px;top:105px;width:1px;height:197px;background:#3c3c3c"></div>
<!-- scrollbar -->
<div class="a" style="left:1863px;top:302px;width:16px;height:720px;background:#4b4b4b"></div>
<div class="a" style="left:1864px;top:302px;width:14px;height:88px;background:#6a6a6a;border-radius:0 0 7px 7px"></div>
<svg class="a" style="left:1863px;top:1010px" width="16" height="10"><path d="M4 3l4 3.5 4-3.5" fill="none" stroke="#bbb" stroke-width="1"/></svg>
<div class="a" style="left:1878px;top:95px;width:1px;height:944px;background:#474747"></div><div class="a" style="left:1879px;top:95px;width:2px;height:944px;background:#3a3a3a"></div>
<!-- right strip -->
<div class="a" style="left:1881px;top:95px;width:37px;height:944px;background:#535353"></div>
<div class="a" style="left:1881px;top:95px;width:37px;height:13px;background:#464646"></div>
<svg class="a" style="left:1881px;top:95px" width="37" height="944" viewBox="1881 95 37 944">
 <path d="M1907.5 99.5l-2.5 2.3 2.5 2.3M1911.5 99.5l-2.5 2.3 2.5 2.3" fill="none" stroke="#e8e8e8" stroke-width="1.3"/>
 <g fill="#3a3a3a">
  <rect x="1890" y="111" width="19" height="4" fill="url(#grip)"/>
 </g>
 <defs><pattern id="grip" width="2" height="4" patternUnits="userSpaceOnUse"><rect width="1" height="4" fill="#2e2e2e"/></pattern></defs>
 <rect x="1890" y="111" width="19" height="4" fill="url(#grip)"/>
 <rect x="1890" y="208" width="19" height="4" fill="url(#grip)"/>
 <rect x="1890" y="304" width="19" height="4" fill="url(#grip)"/>
 <rect x="1890" y="458" width="19" height="4" fill="url(#grip)"/>
 <g fill="#3c3c3c"><rect x="1881" y="203" width="37" height="1"/><rect x="1881" y="293" width="37" height="1"/><rect x="1881" y="454" width="37" height="1"/><rect x="1881" y="607" width="37" height="1"/></g>
 <rect x="1886" y="176" width="27" height="22" rx="2" fill="#2f2f2f"/>
 <g fill="#d6d6d6">
  <!-- pages -->
  <path d="M1892 129l4-4h3v14h-7zM1908 129l-4-4h-3v14h7z"/><rect x="1899.5" y="122" width="1" height="19" fill="#d6d6d6"/>
  <!-- layers -->
  <path d="M1900 179l8 5-8 5-8-5z"/><path d="M1892 188l8 5 8-5 0 2-8 5-8-5z"/>
  <!-- swatches grid -->
  <path d="M1892 222h16v11h-16z"/>
  <!-- color -->
  <rect x="1893" y="278" width="15" height="14"/>
  <!-- stroke -->
  <rect x="1892" y="318" width="16" height="1.6"/><rect x="1892" y="323" width="16" height="2.2"/><rect x="1892" y="328" width="16" height="3"/>
  <!-- align -->
  <rect x="1893" y="345" width="1" height="16"/><rect x="1895" y="348" width="6" height="4"/><rect x="1895" y="354" width="11" height="4"/>
  <!-- pathfinder -->
  <path d="M1894 375h9v4h-4v5h-5z"/><path d="M1900 380h8v10h-9v-6h1z"/>
  <!-- A char -->
  <path d="M1893 486l5-14h2l5 14h-2.5l-1.3-4h-5l-1.3 4zM1897 480h3.5l-1.7-5z"/><rect x="1907" y="472" width="1" height="14"/>
  <!-- pilcrow -->
  <path d="M1899 498h7v2h-1v15h-2v-15h-1v15h-2v-7a4 4 0 0 1-1-8z"/>
  <!-- text wrap -->
  <rect x="1892" y="527" width="16" height="1"/><rect x="1892" y="540" width="16" height="1"/><rect x="1892" y="531" width="3" height="1"/><rect x="1905" y="531" width="3" height="1"/><rect x="1892" y="536" width="3" height="1"/><rect x="1905" y="536" width="3" height="1"/><circle cx="1900" cy="533.5" r="3.5"/>
  <!-- char styles -->
  <path d="M1897 571l4-12h2l4 12h-2l-1-3h-4l-1 3zM1901 566h3l-1.5-4.5z"/>
  <path d="M1901 585h5v2h-1v11h-1.5v-11h-1v11h-1.5v-5a3 3 0 0 1 0-8z"/>
 </g>
 <g fill="none" stroke="#d6d6d6" stroke-width="1.5">
  <path d="M1897 162.5a3.5 3.5 0 0 1 0-7h3a3.5 3.5 0 0 1 0 7M1903 155.5a3.5 3.5 0 0 1 0 7h-3a3.5 3.5 0 0 1 0-7" stroke-width="2"/>
  <path d="M1892.5 250.5h15v10h-15z" stroke-width="1"/>
  <path d="M1893 402h14v14h-14z" stroke-dasharray="2 2" stroke-width="1.6"/>
  <rect x="1893" y="564" width="5" height="5" stroke-width="1"/><rect x="1895" y="566" width="5" height="5" stroke-width="1"/>
  <rect x="1893" y="592" width="5" height="5" stroke-width="1"/><rect x="1895" y="594" width="5" height="5" stroke-width="1"/>
 </g>
 <defs><linearGradient id="sg" x1="0" x2="1"><stop offset="0" stop-color="#111"/><stop offset="1" stop-color="#ddd"/></linearGradient></defs>
 <rect x="1893" y="251" width="14" height="9" fill="url(#sg)"/>
 <g fill="#535353"><rect x="1897" y="223" width="1" height="10"/><rect x="1902" y="223" width="1" height="10"/><rect x="1892" y="227.5" width="16" height="1"/></g><g fill="#8a8a8a"><rect x="1898" y="223" width="4" height="4.5"/><rect x="1893" y="228.5" width="4" height="4.5"/><rect x="1903" y="228.5" width="5" height="4.5"/></g>
 <circle cx="1900.5" cy="285" r="4.2" fill="#d6d6d6" stroke="#535353" stroke-width="1.6"/>
 <circle cx="1895.5" cy="279.5" r="3.6" fill="#d6d6d6" stroke="#535353" stroke-width="1.2"/>
 <text x="1892" y="445" font-family="Liberation Serif, serif" font-style="italic" font-size="17" fill="#d6d6d6">fx</text>
</svg>
<div class="a" style="left:16px;top:1020px;width:1847px;height:19px;background:#575757"></div>
<div class="a" style="left:0;top:999px;width:16px;height:40px;background:#5a5a5a"></div>
<span class="a" style="left:15px;top:1026px;font-size:10px;color:#e6e6e6">75%</span>
<svg class="a" style="left:0;top:1020px" width="1863" height="19" viewBox="0 1020 1863 19">
 <g fill="none" stroke="#cfcfcf" stroke-width="1.1">
  <path d="M57 1028l3.5 3 3.5-3"/>
  <path d="M398 1029l3.5 3 3.5-3"/>
  <path d="M501 1029l3.5 3 3.5-3"/>
  <path d="M1845.5 1026.5h15v11h-15zM1853 1026.5v11" stroke-width="1.3"/>
 </g>
 <g fill="#cfcfcf">
  <rect x="77" y="1027" width="1.5" height="8"/><path d="M85 1027v8l-5-4z"/>
  <path d="M104 1027.5v7l-4-3.5z"/>
  <path d="M219 1027.5v7l4-3.5z"/>
  <path d="M238 1027v8l5-4z"/><rect x="244" y="1027" width="1.5" height="8"/>
 </g>
 <rect x="116.5" y="1022.5" width="89" height="16" rx="2" fill="#454545" stroke="#6a6a6a"/>
 <rect x="189" y="1023" width="1" height="15" fill="#6a6a6a"/>
 <path d="M194 1029l3.5 3 3.5-3" fill="none" stroke="#cfcfcf" stroke-width="1.1"/>
 <path d="M265.5 1036v-5a5 5 0 0 1 10 0v2" fill="none" stroke="#c8c8c8" stroke-width="2.4"/><rect x="269" y="1027" width="3" height="4" fill="#c8c8c8"/><path d="M278 1036h2v2h-2z" fill="#c8c8c8"/>
 <circle cx="429" cy="1031" r="4.5" fill="#1ea82e"/>
</svg>
<span class="a" style="left:120px;top:1026px;font-size:10px;color:#e6e6e6">2</span>
<span class="a" style="left:296px;top:1026px;font-size:10px;color:#e0e0e0">[Basic] (working)</span>
<span class="a" style="left:438px;top:1026px;font-size:10px;color:#e0e0e0">No errors</span>
<svg class="a" style="left:1570px;top:220px" width="170" height="145" viewBox="1570 220 170 145">
 <path d="M1594 348L1700 255" stroke="#f2a91c" stroke-width="6.5" stroke-linecap="round"/>
 <path d="M1719.5 238L1693 245.5L1708.5 262Z" fill="#f2a91c" stroke="#f2a91c" stroke-width="2" stroke-linejoin="round"/>
</svg>

</body></html>
